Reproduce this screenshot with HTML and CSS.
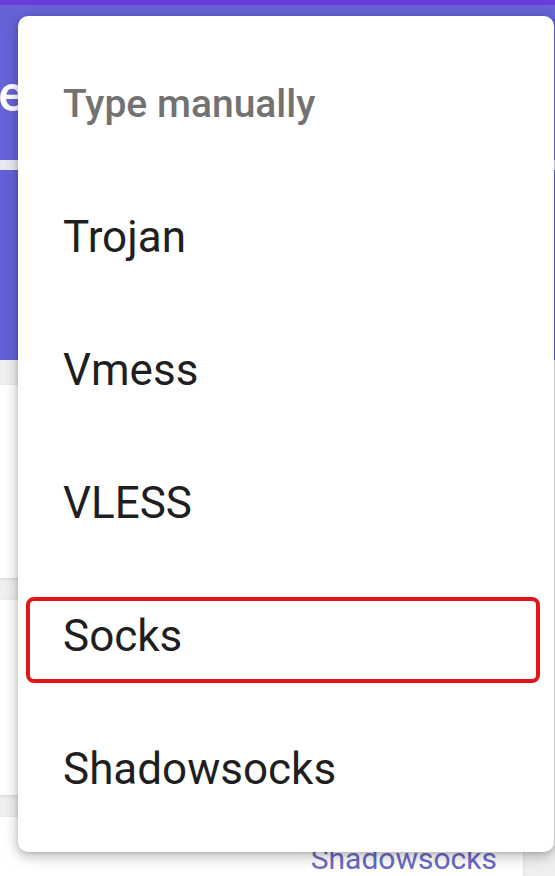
FILE: index.html
```html
<!DOCTYPE html>
<html>
<head>
<meta charset="utf-8">
<link rel="stylesheet" href="styles.css">
</head>
<body>
<div class="page">
  <div class="status"></div>
  <header class="appbar"><div class="title-clip"><h1 class="title">Server</h1></div></header>
  <div class="tabline"></div>
  <div class="hero"></div>
  <div class="list">
    <div class="card c1"></div>
    <div class="card c2"></div>
    <div class="card c3"><span class="proto">Shadowsocks</span></div>
  </div>
</div>
<div class="menu">
  <div class="item heading">Type manually</div>
  <div class="item">Trojan</div>
  <div class="item">Vmess</div>
  <div class="item">VLESS</div>
  <div class="item">Socks</div>
  <div class="item">Shadowsocks</div>
</div>
<div class="highlight"></div>
</body>
</html>
```
FILE: styles.css
```css
html, body {
  margin: 0;
  padding: 0;
  width: 555px;
  height: 876px;
  overflow: hidden;
  font-family: Roboto, "Noto Sans", sans-serif;
  background: #efeff1;
}
.page {
  display: flex;
  flex-direction: column;
}
.status {
  height: 5px;
  background: #6a3bdb;
}
.appbar {
  height: 155px;
  background: #6663d8;
  display: flex;
  align-items: center;
  overflow: hidden;
}
.title-clip {
  width: 18px;
  overflow: hidden;
  padding-top: 22px;
}
.title {
  margin: 0 0 0 -32px;
  color: #fff;
  font-size: 50px;
  font-weight: 500;
  white-space: nowrap;
}
.tabline {
  height: 10px;
  background: #e9e9f1;
}
.hero {
  height: 190px;
  background: #6261d7;
}
.list {
  display: flex;
  flex-direction: column;
  gap: 22px;
  padding: 25px 32px 0 0;
}
.card {
  background: #fff;
  box-shadow: 0 1px 3px rgba(0,0,0,0.12);
}
.c1 { height: 193px; }
.c2 { height: 195px; }
.c3 {
  height: 80px;
  display: flex;
  justify-content: flex-end;
  align-items: flex-end;
  padding-right: 26px;
}
.proto {
  color: #6a69c6;
  font-size: 30px;
  line-height: 40px;
  margin-bottom: 18px;
}
.menu {
  position: absolute;
  left: 18px;
  top: 16px;
  width: 536px;
  height: 836px;
  box-sizing: border-box;
  padding: 22px 0 16px;
  background: #fff;
  border-radius: 10px;
  box-shadow: 0 4px 14px rgba(0,0,0,0.28), 0 1px 4px rgba(0,0,0,0.12);
  display: flex;
  flex-direction: column;
}
.item {
  height: 133px;
  line-height: 133px;
  padding-left: 45px;
  font-size: 44px;
  color: #1f1f1f;
  white-space: nowrap;
}
.item.heading {
  font-size: 39px;
  font-weight: 500;
  color: #727272;
}
.highlight {
  position: absolute;
  left: 26px;
  top: 597px;
  width: 514px;
  height: 86px;
  box-sizing: border-box;
  border: 4px solid #e3141a;
  border-radius: 8px;
}
```
